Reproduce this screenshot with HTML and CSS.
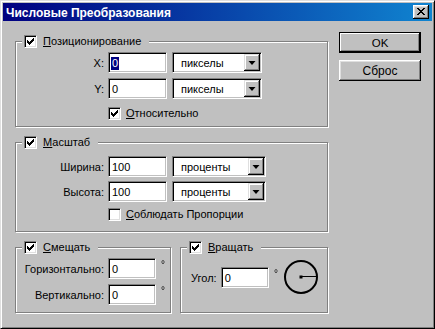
FILE: index.html
```html
<!DOCTYPE html>
<html lang="ru">
<head>
<meta charset="utf-8">
<title>Числовые Преобразования</title>
<link rel="stylesheet" href="styles.css">
</head>
<body>
<div class="window">
  <div class="titlebar">
    <span class="title">Числовые Преобразования</span>
    <span class="close">
      <svg width="8" height="7" viewBox="0 0 8 7" shape-rendering="crispEdges"><path d="M0 0h2v1h-2zM6 0h2v1h-2zM1 1h2v1h-2zM5 1h2v1h-2zM2 2h4v1h-4zM3 3h2v1h-2zM2 4h4v1h-4zM1 5h2v1h-2zM5 5h2v1h-2zM0 6h2v1h-2zM6 6h2v1h-2z" fill="#000"/></svg>
    </span>
  </div>
  <div class="body">
    <div class="groups">
      <div class="group g1">
        <div class="legend"><span class="check on"></span><span><u>П</u>озиционирование</span></div>
        <div class="row r1">
          <span class="lbl">X:</span>
          <span class="field w59"><span class="sel">0</span></span>
          <span class="combo w90"><span class="ctext">пикселы</span><span class="drop"></span></span>
        </div>
        <div class="row r2">
          <span class="lbl">Y:</span>
          <span class="field w59">0</span>
          <span class="combo w90"><span class="ctext">пикселы</span><span class="drop"></span></span>
        </div>
        <div class="optrow"><span class="check on"></span><span><u>О</u>тносительно</span></div>
      </div>

      <div class="group g2">
        <div class="legend"><span class="check on"></span><span><u>М</u>асштаб</span></div>
        <div class="row r1">
          <span class="lbl">Ширина:</span>
          <span class="field w59">100</span>
          <span class="combo w94"><span class="ctext">проценты</span><span class="drop"></span></span>
        </div>
        <div class="row r2">
          <span class="lbl">Высота:</span>
          <span class="field w59">100</span>
          <span class="combo w94"><span class="ctext">проценты</span><span class="drop"></span></span>
        </div>
        <div class="optrow"><span class="check"></span><span><u>С</u>облюдать Пропорции</span></div>
      </div>

      <div class="bottom">
        <div class="group g3">
          <div class="legend"><span class="check on"></span><span><u>С</u>мещать</span></div>
          <div class="row r1">
            <span class="lbl">Горизонтально:</span>
            <span class="field w48">0</span>
            <span class="deg">°</span>
          </div>
          <div class="row r2">
            <span class="lbl">Вертикально:</span>
            <span class="field w48">0</span>
            <span class="deg">°</span>
          </div>
        </div>
        <div class="group g4">
          <div class="legend"><span class="check on"></span><span><u>В</u>ращать</span></div>
          <div class="row rot">
            <span class="lbl short">Угол:</span>
            <span class="field w48">0</span>
            <span class="deg">°</span>
            <svg class="dial" width="36" height="36" viewBox="0 0 36 36">
              <circle cx="18" cy="18" r="16" fill="none" stroke="#000" stroke-width="2"/>
              <path d="M18 17.5H34" stroke="#000" stroke-width="1" fill="none"/>
              <rect x="16.5" y="16.5" width="3" height="3" fill="#000"/>
            </svg>
          </div>
        </div>
      </div>
    </div>
    <div class="buttons">
      <span class="btn default">OK</span>
      <span class="btn">Сброс</span>
    </div>
  </div>
</div>
</body>
</html>
```
FILE: styles.css
```css
* { box-sizing: border-box; }
html, body { margin: 0; padding: 0; }
body {
  width: 435px;
  height: 329px;
  background: #c0c0c0;
  font: 11px "Liberation Sans", Arial, sans-serif;
  color: #000;
  overflow: hidden;
}
.window {
  width: 435px;
  height: 329px;
  background: #c0c0c0;
  border: 1px solid;
  border-color: #dfdfdf #000 #000 #dfdfdf;
  box-shadow: inset 1px 1px #fff, inset -1px -1px #808080;
  padding: 2px;
  display: flex;
  flex-direction: column;
}
.titlebar {
  height: 18px;
  flex: none;
  background: linear-gradient(to right, #000080, #1084d0);
  display: flex;
  align-items: center;
  padding: 0 3px;
  color: #fff;
  font-weight: bold;
  font-size: 12px;
}
.title { flex: 1; padding-top: 1px; }
.close {
  width: 16px;
  height: 14px;
  background: #c0c0c0;
  box-shadow: inset -1px -1px #000, inset 1px 1px #fff, inset -2px -2px #808080, inset 2px 2px #dfdfdf;
  display: flex;
  align-items: center;
  justify-content: center;
  padding-bottom: 1px;
}
.close svg { display: block; }

.body { display: flex; padding-left: 12px; }
.groups { width: 313px; margin-top: 20px; display: flex; flex-direction: column; }

.group {
  border: 1px solid #808080;
  box-shadow: 1px 1px 0 #fff, inset 1px 1px 0 #fff;
  display: flex;
  flex-direction: column;
}
.legend {
  display: flex;
  align-items: center;
  gap: 6px;
  height: 13px;
  margin: -7px 0 0 6px;
  padding: 0 8px 0 2px;
  background: #c0c0c0;
  width: max-content;
  line-height: 13px;
}
.g1 { height: 86px; }
.g2 { height: 90px; margin-top: 15px; }
.bottom { display: flex; gap: 9px; margin-top: 15px; }
.g3 { width: 156px; height: 66px; }
.g4 { width: 148px; height: 66px; }

.row { display: flex; align-items: center; height: 21px; }
.g1 .r1 { margin-top: 4px; }
.g1 .r2 { margin-top: 5px; }
.g2 .r1 { margin-top: 7px; }
.g2 .r2 { margin-top: 4px; }
.g3 .r1 { margin-top: 4px; }
.g3 .r2 { margin-top: 5px; }
.g4 .rot { margin-top: 13px; padding-left: 10px; }

.lbl { width: 88px; text-align: right; margin-right: 4px; white-space: nowrap; }
.lbl.short { width: auto; margin-right: 4px; }

.field, .combo {
  height: 21px;
  background: #fff;
  border: 1px solid;
  border-color: #808080 #fff #fff #808080;
  box-shadow: inset 1px 1px #000, inset -1px -1px #c0c0c0;
  display: flex;
  align-items: center;
  padding: 1px 3px 0 3px;
}
.w59 { width: 59px; }
.w48 { width: 48px; }
.w90 { width: 90px; margin-left: 5px; }
.w94 { width: 94px; margin-left: 5px; }
.sel { background: #000080; color: #fff; padding: 0 1px; line-height: 13px; margin-left: -1px; }
.combo { padding: 1px 1px 1px 8px; }
.ctext { flex: 1; }
.drop {
  width: 16px;
  height: 17px;
  margin-top: -1px;
  background: #c0c0c0;
  box-shadow: inset -1px -1px #000, inset 1px 1px #dfdfdf, inset -2px -2px #808080, inset 2px 2px #fff;
  position: relative;
}
.drop::after {
  content: "";
  position: absolute;
  left: 4px;
  top: 7px;
  border-style: solid;
  border-width: 4px 4px 0 4px;
  border-color: #000 transparent transparent transparent;
  width: 0;
  height: 0;
  transform: scaleX(0.875);
}
.deg {
  align-self: flex-start;
  width: 6px;
  font-size: 10px;
  line-height: 10px;
  margin-left: 5px;
  margin-top: 2px;
  color: #000;
  opacity: 0.99;
  will-change: transform;
}
.dial { display: block; margin-left: 3px; margin-top: -1px; }

.optrow {
  display: flex;
  align-items: center;
  gap: 5px;
  height: 13px;
  margin: 8px 0 0 92px;
  line-height: 13px;
}
.g2 .optrow { margin-top: 6px; }

.check {
  width: 13px;
  height: 13px;
  flex: none;
  background: #fff;
  border: 1px solid;
  border-color: #808080 #fff #fff #808080;
  box-shadow: inset 1px 1px #000, inset -1px -1px #dfdfdf;
  position: relative;
}
.check.on::after {
  content: "";
  position: absolute;
  left: 2px;
  top: 2px;
  width: 7px;
  height: 7px;
  background:
    linear-gradient(#000, #000) 6px 0 / 1px 3px no-repeat,
    linear-gradient(#000, #000) 5px 1px / 1px 3px no-repeat,
    linear-gradient(#000, #000) 4px 2px / 1px 3px no-repeat,
    linear-gradient(#000, #000) 3px 3px / 1px 3px no-repeat,
    linear-gradient(#000, #000) 2px 4px / 1px 3px no-repeat,
    linear-gradient(#000, #000) 1px 3px / 1px 3px no-repeat,
    linear-gradient(#000, #000) 0 2px / 1px 3px no-repeat;
}

.buttons { display: flex; flex-direction: column; margin: 11px 0 0 11px; gap: 7px; }
.btn {
  width: 82px;
  height: 21px;
  display: flex;
  align-items: center;
  justify-content: center;
  background: #c0c0c0;
  box-shadow: inset -1px -1px #000, inset 1px 1px #fff, inset -2px -2px #808080, inset 2px 2px #dfdfdf;
  font-size: 12px;
}
.btn.default {
  border: 1px solid #000;
  box-shadow: inset -1px -1px #000, inset 1px 1px #fff, inset -2px -2px #808080;
  font-size: 11.5px;
}
```
